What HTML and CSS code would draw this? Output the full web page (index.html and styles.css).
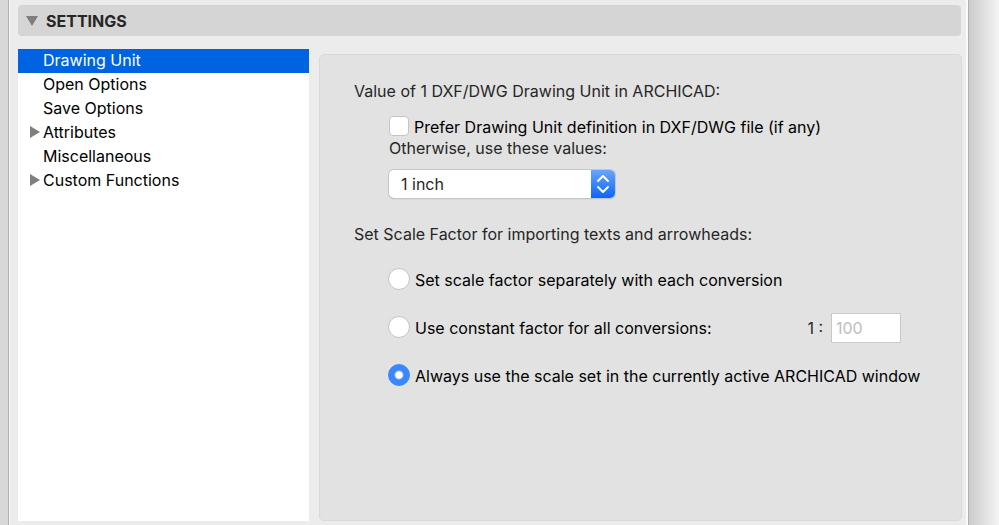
FILE: index.html
```html
<!DOCTYPE html>
<html lang="en">
<head>
  <meta charset="UTF-8" />
  <meta name="viewport" content="width=device-width, initial-scale=1.0" />
  <title>Settings</title>
  <link rel="stylesheet" href="styles.css">
</head>
<body>
  <main class="window">
    <h1 class="section">
      <button type="button" class="section__toggle" aria-expanded="true">
        <svg class="section__arrow" width="14" height="12" viewBox="0 0 14 12" aria-hidden="true"><path d="M1 1h12L7 11z" fill="#7f7f7f"/></svg>
        SETTINGS
      </button>
    </h1>

    <div class="content">
      <nav class="menu">
        <a href="#drawing-unit" class="menu__item menu__item--active">Drawing Unit</a>
        <a href="#open-options" class="menu__item">Open Options</a>
        <a href="#save-options" class="menu__item">Save Options</a>
        <a href="#attributes" class="menu__item">
          <svg class="menu__arrow" width="12" height="14" viewBox="0 0 12 14" aria-hidden="true"><path d="M1 1v12l10-6z" fill="#7f7f7f"/></svg>Attributes</a>
        <a href="#miscellaneous" class="menu__item">Miscellaneous</a>
        <a href="#custom-functions" class="menu__item">
          <svg class="menu__arrow" width="12" height="14" viewBox="0 0 12 14" aria-hidden="true"><path d="M1 1v12l10-6z" fill="#7f7f7f"/></svg>Custom Functions</a>
      </nav>

      <form class="panel" id="drawing-unit">
        <h2 class="panel__title">Value of 1 DXF/DWG Drawing Unit in ARCHICAD:</h2>
        <div class="unit">
          <label class="option">
            <input type="checkbox" class="option__check" name="prefer" />
            Prefer Drawing Unit definition in DXF/DWG file (if any)
          </label>
          <label class="unit__label" for="unit">Otherwise, use these values:</label>
          <div class="select">
            <select id="unit" name="unit" class="select__field">
              <option>1 inch</option>
            </select>
            <svg class="select__arrows" width="24" height="28" viewBox="0 0 24 28" aria-hidden="true">
              <path d="M7 11l5-5 5 5M7 17l5 5 5-5" fill="none" stroke="#fff" stroke-width="2" stroke-linecap="round" stroke-linejoin="round"/>
            </svg>
          </div>
        </div>

        <h2 class="panel__title">Set Scale Factor for importing texts and arrowheads:</h2>
        <div class="scale">
          <label class="option">
            <input type="radio" class="option__radio" name="scale" />
            Set scale factor separately with each conversion
          </label>
          <div class="scale__row">
            <label class="option">
              <input type="radio" class="option__radio" name="scale" />
              Use constant factor for all conversions:
            </label>
            <div class="factor">
              <label for="factor">1 :</label>
              <input type="text" id="factor" class="factor__input" value="100" disabled />
            </div>
          </div>
          <label class="option">
            <input type="radio" class="option__radio" name="scale" checked />
            Always use the scale set in the currently active ARCHICAD window
          </label>
        </div>
      </form>
    </div>
  </main>
</body>
</html>
```
FILE: styles.css
```css
* {
  box-sizing: border-box;
}

body {
  display: flex;
  min-height: 100vh;
  margin: 0;
  padding: 0 30px 0 8px;
  background: linear-gradient(to left, #f4f4f4, #cbcbcb 30px, #cbcbcb 50%, #d8d8d8);
  font-family: Inter, "Liberation Sans", sans-serif;
  font-size: 16px;
  line-height: 24px;
  color: #262626;
}

input,
select,
button {
  margin: 0;
  font: inherit;
  color: inherit;
}

.window {
  flex: 1;
  display: flex;
  flex-direction: column;
  gap: 13px;
  padding: 5px 6px 4px 9px;
  background-color: #ececec;
  border-left: 1px solid #b2b2b2;
  border-right: 1px solid #b0b0b0;
  box-shadow: inset 1px 0 #f5f5f5, inset -2px 0 #fafafa;
}

.section {
  margin: 0 1px 0 0;
  font-size: 16px;
}

.section__toggle {
  display: flex;
  align-items: center;
  gap: 7px;
  width: 100%;
  padding: 4px 7px 3px;
  border: none;
  border-radius: 4px;
  background-color: #d5d5d5;
  font-weight: 700;
}

.content {
  flex: 1;
  display: grid;
  grid-template-columns: 291px 1fr;
  gap: 10px;
}

.menu {
  background-color: #fff;
}

.menu__item {
  display: flex;
  align-items: center;
  padding: 0 0 2px 25px;
  line-height: 22px;
  color: #000;
  text-decoration: none;
}

.menu__item--active {
  background-color: #0063e1;
  color: #fff;
}

.menu__arrow {
  margin: 0 2px 0 -14px;
}

.panel {
  margin-top: 5px;
  padding: 24px 34px;
  border: 1px solid #d9d9d9;
  border-radius: 5px;
  background-color: #e2e2e2;
}

.panel__title {
  margin: 0;
  font-size: 16px;
  font-weight: 400;
}

.unit {
  display: flex;
  flex-direction: column;
  align-items: flex-start;
  padding: 12px 0 24px 35px;
}

.option {
  display: flex;
  align-items: center;
  gap: 5px;
  color: #000;
}

.option__check,
.option__radio {
  appearance: none;
  flex: none;
  margin-bottom: 2px;
  background-color: #fff;
  border: 1px solid #c4c4c4;
}

.option__check {
  width: 20px;
  height: 20px;
  border-radius: 4px;
}

.option__radio {
  width: 22px;
  height: 22px;
  border-radius: 50%;
}

.option__radio:checked {
  background: radial-gradient(circle, #fff 3px, #3a87fd 5px);
  border-color: #3a87fd;
}

.unit__label {
  line-height: 18px;
}

.select {
  display: grid;
  width: 226px;
  margin-top: 13px;
  border-radius: 5px;
  box-shadow: 0 0 0 1px #c6c6c6, 0 1px 1px #999;
  overflow: hidden;
}

.select__field,
.select__arrows {
  grid-area: 1 / 1;
}

.select__field {
  appearance: none;
  height: 28px;
  padding: 0 12px;
  border: none;
  background-color: #fff;
}

.select__arrows {
  justify-self: end;
  background: linear-gradient(#6aa5fb, #0a66fc);
  pointer-events: none;
}

.scale {
  display: flex;
  flex-direction: column;
  gap: 18px;
  padding: 19px 0 0 34px;
}

.scale .option {
  min-height: 30px;
}

.scale__row {
  display: flex;
  justify-content: space-between;
  padding-right: 26px;
}

.factor {
  display: flex;
  align-items: center;
  gap: 8px;
}

.factor__input {
  width: 70px;
  height: 30px;
  padding: 0 4px;
  border: 1px solid #c9c9c9;
  background-color: #fff;
  color: #bdbdbd;
}
```
